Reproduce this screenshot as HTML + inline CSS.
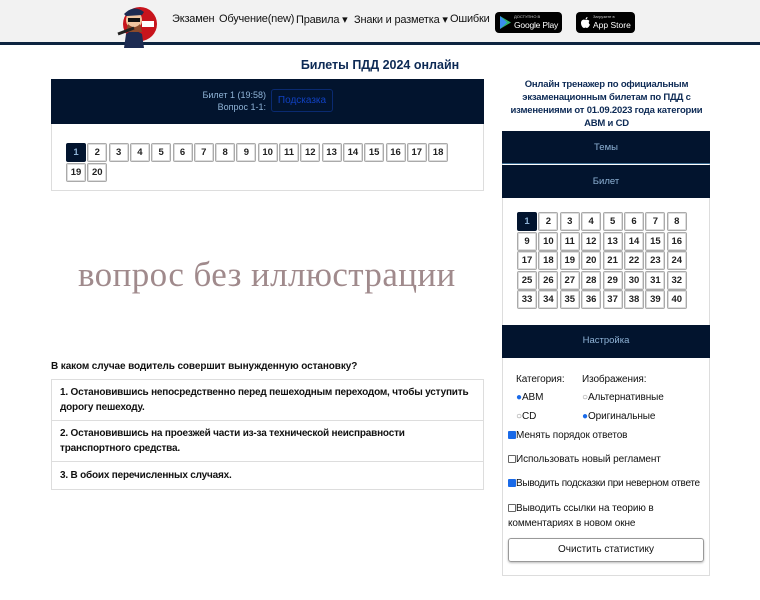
<!DOCTYPE html>
<html><head><meta charset="utf-8"><style>
*{box-sizing:border-box;margin:0;padding:0}
body{width:760px;height:600px;overflow:hidden;background:#fff;font-family:"Liberation Sans",sans-serif;color:#111;position:relative}
.abs{position:absolute;white-space:nowrap}
.hdr{left:0;top:0;width:760px;height:45px;background:#f2f2f2;border-bottom:3px solid #0d2440}
.nav{top:13px;font-size:11px;color:#111;letter-spacing:-0.2px}
.badge{background:#000;border-radius:4px;color:#fff;height:21px;top:12px}
.dark{background:#02142e;color:#8fb3d6;font-size:9.5px;text-align:center}
.nb{position:absolute;width:20px;height:19px;border:1px solid #aaa;border-radius:2px;background:#fff;font-size:9.5px;font-weight:bold;text-align:center;line-height:17px;color:#222;box-shadow:inset 0 0 0 1px #ddd}
.nb.a{background:#02142e;color:#8fb3d6;border-color:#02142e;box-shadow:none}
.ans{left:51px;width:433px;border:1px solid #ddd;font-size:10px;font-weight:bold;padding:5px 8px;line-height:15px;white-space:normal;letter-spacing:-0.2px}
.s{font-size:10px;color:#111;letter-spacing:-0.1px}
</style></head><body>
<div class="abs hdr"></div>
<svg class="abs" style="left:114px;top:2px" width="46" height="46" viewBox="0 0 46 46">
<circle cx="26" cy="22" r="17" fill="#c8141c"/><rect x="28" y="19" width="12" height="6" fill="#fff"/>
<path d="M10 46 L12 32 Q20 26 28 32 L30 46Z" fill="#1d2b52"/>
<ellipse cx="20" cy="18" rx="8" ry="9" fill="#f0c5a0"/>
<path d="M10 12 Q20 2 30 10 L28 13 L12 14Z" fill="#1d2b52"/>
<rect x="14" y="16" width="12" height="4" fill="#111"/>
<path d="M14 22 Q20 28 26 22 L28 30 L12 30Z" fill="#8b4a2b"/>
<line x1="4" y1="32" x2="20" y2="26" stroke="#222" stroke-width="3"/>
</svg>
<div class="abs nav" style="left:172px">Экзамен</div>
<div class="abs nav" style="left:219px">Обучение(new)</div>
<div class="abs nav" style="left:296px">Правила ▾</div>
<div class="abs nav" style="left:354px">Знаки и разметка ▾</div>
<div class="abs nav" style="left:450px">Ошибки</div>
<div class="abs badge" style="left:495px;width:67px"><svg class="abs" style="left:5px;top:4px" width="11" height="13" viewBox="0 0 11 13"><path d="M0 0L11 6.5L0 13Z" fill="#2fb36b"/><path d="M0 0L7 6.5L0 13Z" fill="#3a8ef0"/></svg><div class="abs" style="left:19px;top:2px;font-size:4px;color:#ccc">ДОСТУПНО В</div><div class="abs" style="left:19px;top:8px;font-size:8.5px;letter-spacing:-0.2px">Google Play</div></div>
<div class="abs badge" style="left:576px;width:59px"><svg class="abs" style="left:5px;top:5px" width="9" height="11" viewBox="0 0 9 11"><path d="M4.5 3C2 2 0 3.5 0 6C0 9 2 11 3 11C4 11 4 10.5 4.5 10.5C5 10.5 5 11 6 11C7 11 8.5 9 9 7.5C7.5 7 7.5 4.5 8.5 4C7.5 2.5 5.5 2.5 4.5 3ZM4.5 2.5C4.5 1 5.5 0 6.5 0C6.5 1.5 5.5 2.5 4.5 2.5Z" fill="#fff"/></svg><div class="abs" style="left:17px;top:2px;font-size:4px;color:#ccc">Загрузите в</div><div class="abs" style="left:17px;top:8px;font-size:8.5px">App Store</div></div>

<div class="abs" style="left:0;width:760px;top:58px;text-align:center;font-size:12.5px;font-weight:bold;color:#0d2a55">Билеты ПДД 2024 онлайн</div>

<div class="abs" style="left:51px;top:79px;width:433px;height:112px;border:1px solid #ddd"></div>
<div class="abs dark" style="left:51px;top:79px;width:433px;height:45px"></div>
<div class="abs" style="left:180px;top:89px;width:86px;text-align:right;font-size:9px;color:#8fb3d6;line-height:12px">Билет 1 (19:58)<br>Вопрос 1-1:</div>
<div class="abs" style="left:271px;top:89px;width:62px;height:23px;border:1px solid #0a2a70;border-radius:3px;color:#1040c0;font-size:10px;text-align:center;line-height:21px">Подсказка</div>
<div id="lg"></div>

<div class="abs" style="left:78px;top:255px;font-family:'Liberation Serif',serif;font-size:35px;color:#a08a8c;letter-spacing:0.4px">вопрос без иллюстрации</div>

<div class="abs" style="left:51px;top:361px;font-size:10px;font-weight:bold;letter-spacing:-0.1px">В каком случае водитель совершит вынужденную остановку?</div>
<div class="abs ans" style="top:379px;height:42px">1. Остановившись непосредственно перед пешеходным переходом, чтобы уступить дорогу пешеходу.</div>
<div class="abs ans" style="top:420px;height:42px">2. Остановившись на проезжей части из-за технической неисправности транспортного средства.</div>
<div class="abs ans" style="top:461px;height:29px;padding-top:6px">3. В обоих перечисленных случаях.</div>

<div class="abs" style="left:500px;top:78px;width:213px;text-align:center;font-size:9.5px;font-weight:bold;color:#0d2a55;line-height:13px;white-space:normal;letter-spacing:-0.2px">Онлайн тренажер по официальным экзаменационным билетам по ПДД с изменениями от 01.09.2023 года категории ABM и CD</div>
<div class="abs" style="left:502px;top:131px;width:208px;height:445px;border:1px solid #ddd"></div>
<div class="abs dark" style="left:502px;top:131px;width:208px;height:33px;line-height:33px;border-bottom:1px solid #3a6a90">Темы</div>
<div class="abs dark" style="left:502px;top:165px;width:208px;height:33px;line-height:33px">Билет</div>
<div class="abs dark" style="left:502px;top:325px;width:208px;height:33px;line-height:32px">Настройка</div>
<div id="rg"></div>

<div class="abs s" style="left:516px;top:374px">Категория:</div>
<div class="abs s" style="left:582px;top:374px">Изображения:</div>
<div class="abs s" style="left:516px;top:392px"><span style="color:#1a6ae8">●</span>ABM</div>
<div class="abs s" style="left:582px;top:392px"><span style="color:#888">○</span>Альтернативные</div>
<div class="abs s" style="left:516px;top:411px"><span style="color:#888">○</span>CD</div>
<div class="abs s" style="left:582px;top:411px"><span style="color:#1a6ae8">●</span>Оригинальные</div>
<div class="abs s" style="left:508px;top:430px"><span style="display:inline-block;width:8px;height:8px;background:#1a6ae8;border-radius:1px;vertical-align:-1px"></span>Менять порядок ответов</div>
<div class="abs s" style="left:508px;top:454px"><span style="display:inline-block;width:8px;height:8px;border:1px solid #666;border-radius:1px;vertical-align:-1px"></span>Использовать новый регламент</div>
<div class="abs s" style="left:508px;top:478px;letter-spacing:-0.3px"><span style="display:inline-block;width:8px;height:8px;background:#1a6ae8;border-radius:1px;vertical-align:-1px"></span>Выводить подсказки при неверном ответе</div>
<div class="abs s" style="left:508px;top:501px;line-height:15px;width:195px;white-space:normal"><span style="display:inline-block;width:8px;height:8px;border:1px solid #666;border-radius:1px;vertical-align:-1px"></span>Выводить ссылки на теорию в комментариях в новом окне</div>
<div class="abs" style="left:508px;top:538px;width:196px;height:24px;border:1px solid #999;border-radius:3px;font-size:10px;text-align:center;line-height:22px;box-shadow:0 1px 2px #bbb">Очистить статистику</div>

<script>
var h='';
for(var i=1;i<=20;i++){var r=i<=18?0:1,c=i<=18?i-1:i-19;h+='<div class="nb'+(i==1?' a':'')+'" style="left:'+(66+c*21.3)+'px;top:'+(143+r*19.5)+'px">'+i+'</div>';}
document.getElementById('lg').innerHTML=h;h='';
for(var i=1;i<=40;i++){var r=Math.floor((i-1)/8),c=(i-1)%8;h+='<div class="nb'+(i==1?' a':'')+'" style="left:'+(517+c*21.4)+'px;top:'+(212+r*19.6)+'px">'+i+'</div>';}
document.getElementById('rg').innerHTML=h;
</script>
</body></html>
